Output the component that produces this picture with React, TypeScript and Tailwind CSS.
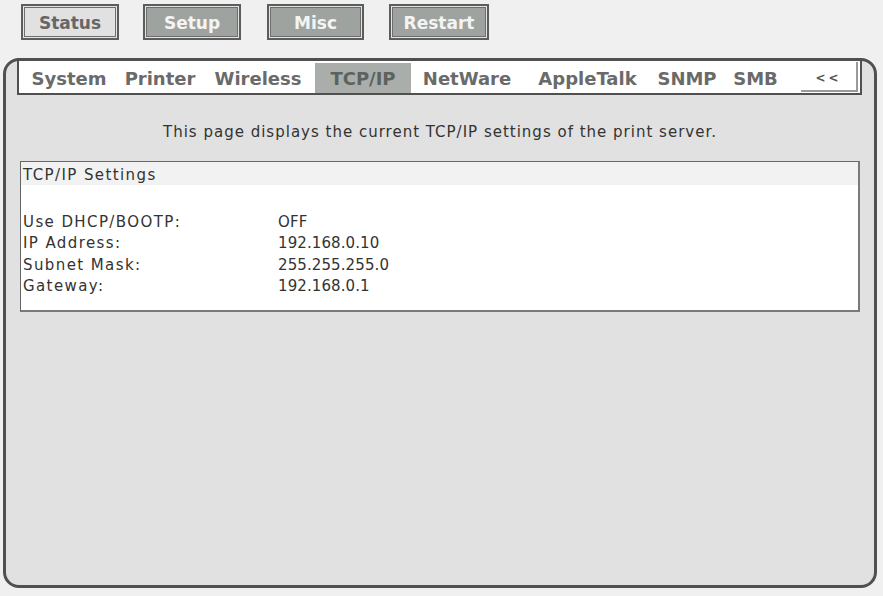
import React from 'react';

// top level navigation buttons
const TOP_BUTTONS = [
  { label: 'Status', width: 'w-[98px]', gap: 'ml-[18px]', active: true },
  { label: 'Setup', width: 'w-[98px]', gap: 'ml-[24px]', active: false },
  { label: 'Misc', width: 'w-[97px]', gap: 'ml-[26px]', active: false },
  { label: 'Restart', width: 'w-[100px]', gap: 'ml-[25px]', active: false },
];

const TABS = [
  { label: 'System', width: 'w-[100px]' },
  { label: 'Printer', width: 'w-[82px]' },
  { label: 'Wireless', width: 'w-[114px]' },
  { label: 'TCP/IP', width: 'w-[96px]', current: true },
  { label: 'NetWare', width: 'w-[112px]' },
  { label: 'AppleTalk', width: 'w-[129px]' },
  { label: 'SNMP', width: 'w-[70px]' },
  { label: 'SMB', width: 'w-[67px]' },
];

const SETTINGS = [
  ['Use DHCP/BOOTP:', 'OFF'],
  ['IP Address:', '192.168.0.10'],
  ['Subnet Mask:', '255.255.255.0'],
  ['Gateway:', '192.168.0.1'],
];

function TopButton({ label, width, gap, active }: (typeof TOP_BUTTONS)[number]) {
  return (
    <div className={`${gap} ${width} h-[36px] border-2 border-[#5c5c5c] p-[1px] bg-[#e4e4e4]`}>
      <div
        className={`h-full border border-[#6e6e6e] text-center pt-[3px] leading-[25px] text-[17px] font-bold ${
          active ? 'bg-[#e1e1e1] text-[#666666]' : 'bg-[#9ea39f] text-[#f4f4f4]'
        }`}
      >
        {label}
      </div>
    </div>
  );
}

export default function App() {
  return (
    <div className="min-h-[596px] w-[883px] bg-[#f0f0f0] px-[3px] pt-[4px] font-['DejaVu_Sans',sans-serif]">
      {/* --- Main menu --- */}
      <div className="flex">
        {TOP_BUTTONS.map((b) => (
          <TopButton key={b.label} {...b} />
        ))}
      </div>

      {/* --- Rounded setup panel --- */}
      <div className="mt-[18px] h-[530px] w-[874px] rounded-[16px] border-[3px] border-[#505050] bg-[#e1e1e1]">
        {/* Tab strip */}
        <div className="-mt-[3px] ml-[11px] mr-[12px] flex h-[37px] border-t-[3px] border-l-2 border-r-2 border-b-2 border-[#505050] bg-white">
          {TABS.map((t) => (
            <div
              key={t.label}
              className={`${t.width} mt-[2px] h-[30px] pt-[2px] text-center text-[18px] font-bold leading-[28px] ${
                t.current ? 'bg-[#a9aeab] text-[#5e625f]' : 'text-[#6a6a6a]'
              }`}
            >
              {t.label}
            </div>
          ))}
          <div className="ml-[12px] mt-[1px] flex h-[30px] w-[57px] items-center justify-center border-r-2 border-b-2 border-[#9a9a9a] pt-[3px] text-[12px] font-bold tracking-[3px] text-[#555555]">
            &lt;&lt;
          </div>
        </div>

        {/* Caption */}
        <p className="mt-[28px] text-center text-[15px] leading-[18px] tracking-[1px] text-[#333333]">
          This page displays the current TCP/IP settings of the print server.
        </p>

        {/* Settings table */}
        <div className="mx-[14px] mt-[20px] border border-[#666666] border-r-2 border-b-2 border-r-[#7a7a7a] border-b-[#7a7a7a] bg-white text-[15px] text-[#333333]">
          <div className="h-[23px] bg-[#f2f2f2] pl-[2px] pt-[4px] leading-[19px] tracking-[1.4px]">TCP/IP Settings</div>
          <div className="pb-[13px] pl-[2px] pt-[27px]">
            {SETTINGS.map(([k, v]) => (
              <div key={k} className="grid grid-cols-[255px_1fr] leading-[21.3px]">
                <span className="tracking-[1.4px]">{k}</span>
                <span className="tracking-[0.1px]">{v}</span>
              </div>
            ))}
          </div>
        </div>
      </div>
    </div>
  );
}
